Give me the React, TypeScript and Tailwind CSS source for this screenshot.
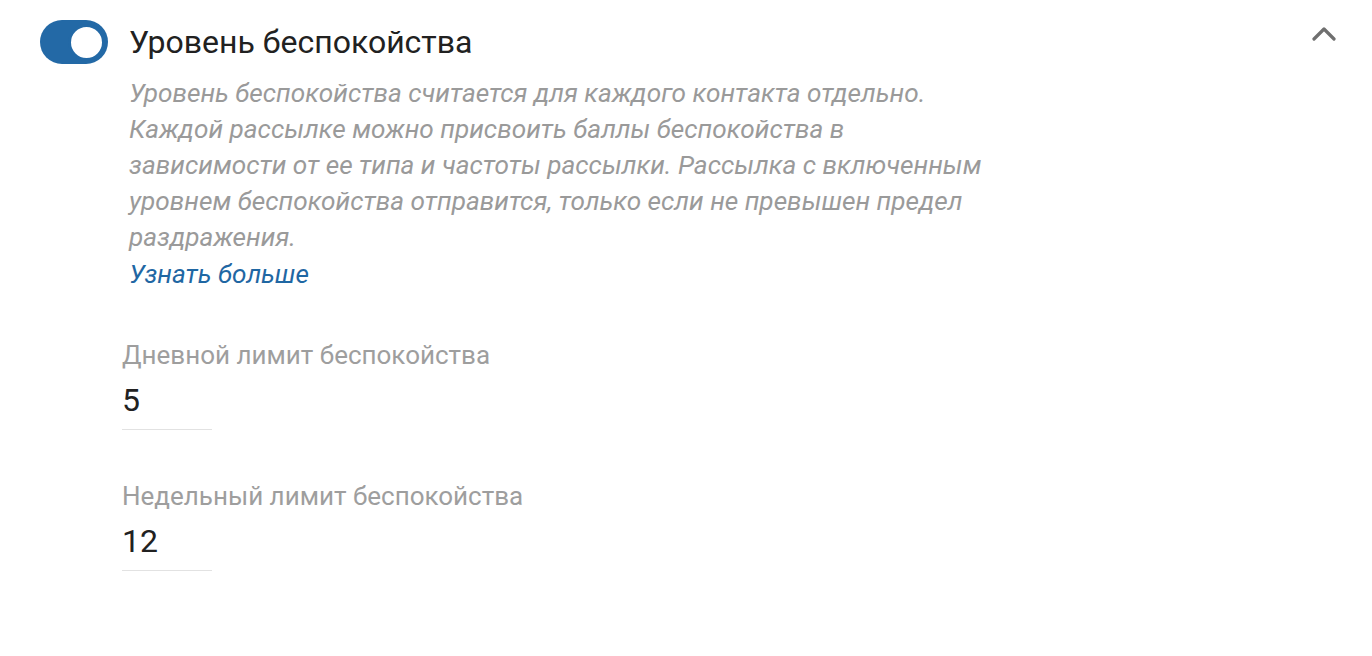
import React from "react";

export default function App() {
  return (
    <div className="w-[1372px] h-[656px] bg-white font-['Roboto',sans-serif] relative">
      <div className="flex items-start pl-[40px] pr-[36px] pt-[20px]">
        <div className="w-[68px] h-[44px] rounded-full bg-[#2369a6] flex items-center justify-end pr-[3px] shrink-0">
          <div className="w-[37px] h-[37px] rounded-full bg-white border-[3px] border-[#2369a6]"></div>
        </div>
        <div className="ml-[21px] flex-1">
          <div className="text-[32px] leading-[44px] text-[#212121]">Уровень беспокойства</div>
        </div>
        <svg width="24" height="16" viewBox="0 0 24 16" className="mt-[6px]">
          <path d="M2 13 L12 3 L22 13" fill="none" stroke="#6f6f6f" strokeWidth="3.2" strokeLinecap="round" strokeLinejoin="round" />
        </svg>
      </div>
      <div className="pl-[129px] mt-[11px]">
        <p className="italic text-[26.2px] leading-[36px] text-[#9a9a9a] w-[860px]">
          Уровень беспокойства считается для каждого контакта отдельно. Каждой рассылке можно присвоить баллы беспокойства в зависимости от ее типа и частоты рассылки. Рассылка с включенным уровнем беспокойства отправится, только если не превышен предел раздражения.
        </p>
        <a className="italic text-[26.2px] leading-[36px] text-[#1f67a3] block mt-[1px]">Узнать больше</a>
      </div>
      <div className="pl-[122px] mt-[45px] flex flex-col gap-[48px]">
        <div className="flex flex-col">
          <div className="text-[26px] leading-[36px] text-[#9e9e9e]">Дневной лимит беспокойства</div>
          <div className="text-[32px] leading-[36px] text-[#212121] mt-[9px] pb-[11px] w-[90px] border-b border-[#e2e2e2]">5</div>
        </div>
        <div className="flex flex-col">
          <div className="text-[26px] leading-[36px] text-[#9e9e9e]">Недельный лимит беспокойства</div>
          <div className="text-[32px] leading-[36px] text-[#212121] mt-[9px] pb-[11px] w-[90px] border-b border-[#e2e2e2]">12</div>
        </div>
      </div>
    </div>
  );
}
